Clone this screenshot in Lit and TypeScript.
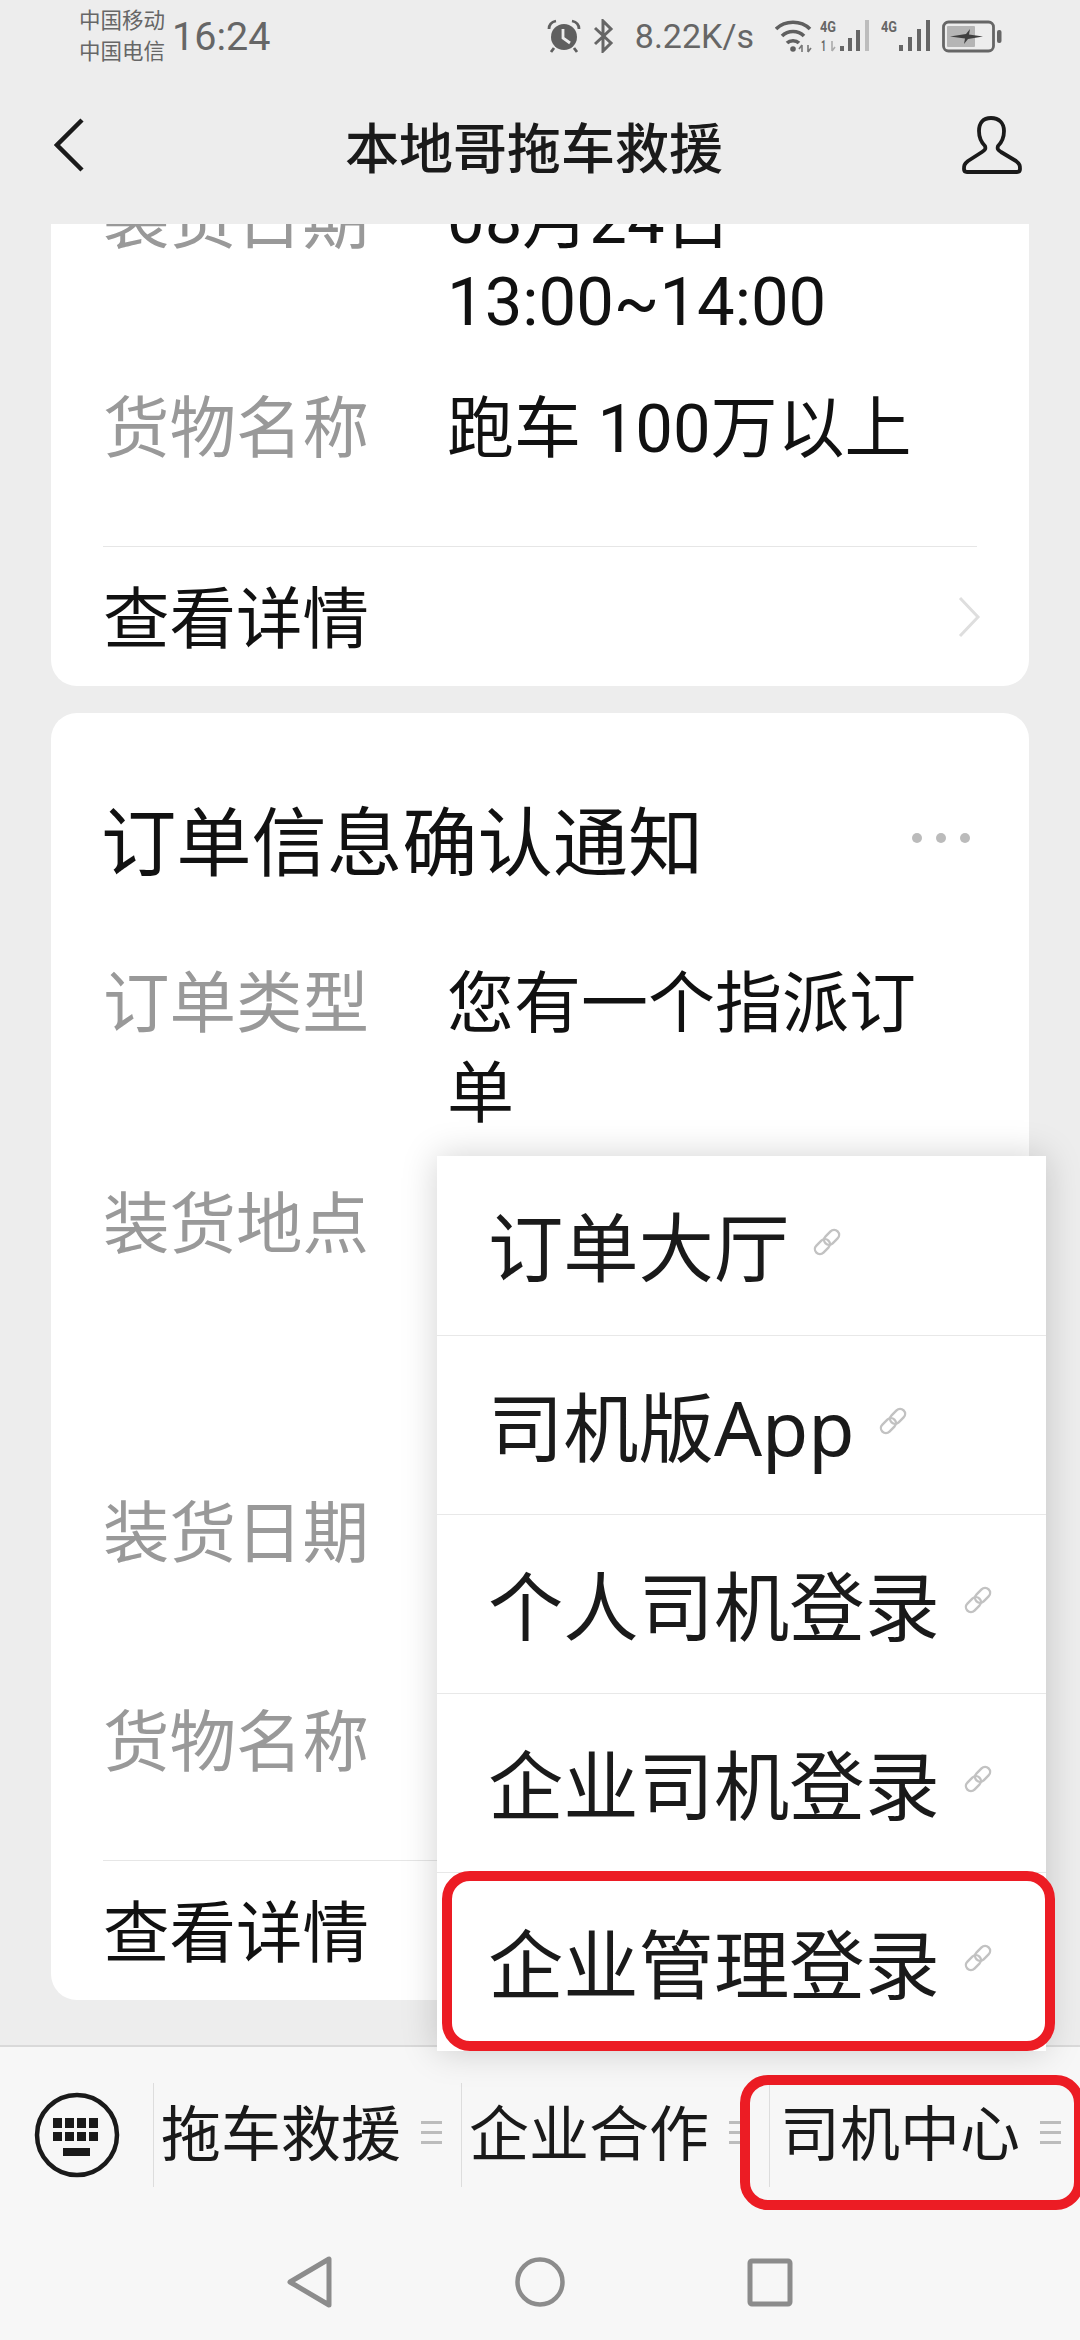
import { LitElement, html, css, svg } from "lit";
import { customElement } from "lit/decorators.js";

const linkIcon = svg`<svg class="link" viewBox="0 0 30 30" fill="none" stroke="#c2c2c2" stroke-width="2.4">
  <g transform="rotate(45 15 15)">
    <rect x="10" y="0" width="10" height="17" rx="5"/>
    <rect x="10" y="13" width="10" height="17" rx="5"/>
  </g>
</svg>`;

const sigText = (x: number, y: number, t: string, w: number) =>
  svg`<text x="${x}" y="${y}" font-size="14" font-family="Roboto, sans-serif" font-weight="700" fill="#666" textLength="${w}" lengthAdjust="spacingAndGlyphs">${t}</text>`;

const signalOne = svg`<svg class="sig" viewBox="0 0 50 34">
  ${sigText(0, 13, "4G", 16)}
  ${sigText(1, 32, "1", 5)}
  <path d="M12 22 V32 M12 32 L15 28" stroke="#aaa" stroke-width="1.6" fill="none"/>
  <g fill="#666">
    <rect x="20" y="27" width="4" height="5"/>
    <rect x="28" y="19" width="4" height="13"/>
    <rect x="36" y="11" width="4" height="21"/>
  </g>
  <rect x="45" y="1" width="4" height="31" fill="#bdbdbd"/>
</svg>`;

const signalTwo = svg`<svg class="sig" viewBox="0 0 50 34">
  ${sigText(0, 13, "4G", 16)}
  <g fill="#666">
    <rect x="18" y="26" width="4" height="6"/>
    <rect x="27" y="18" width="4" height="14"/>
    <rect x="36" y="10" width="4" height="22"/>
    <rect x="45" y="1" width="4" height="31"/>
  </g>
</svg>`;

type Row = { label: string; lines?: string[]; cls?: string };

@customElement("app-root")
export class AppRoot extends LitElement {
  static styles = css`
    :host {
      display: flex;
      flex-direction: column;
      width: 1080px;
      height: 2340px;
      overflow: hidden;
      background: #ededed;
      font-family: Roboto, "Noto Sans CJK SC", sans-serif;
      color: #111;
    }

    /* status bar */
    .status {
      height: 72px;
      flex-shrink: 0;
      display: flex;
      align-items: center;
      padding: 0 78px 0 79px;
      color: #666;
    }
    .carrier {
      font-size: 21.5px;
      line-height: 31px;
      margin-right: 7px;
    }
    .time {
      font-size: 39.5px;
    }
    .sys {
      margin-left: auto;
      display: flex;
      align-items: center;
      gap: 11px;
    }
    .sys svg {
      display: block;
    }
    .alarm { width: 34px; height: 34px; }
    .bt { width: 22px; height: 34px; }
    .speed {
      font-size: 34px;
      margin: 0 10px;
    }
    .wifi { width: 38px; height: 34px; margin-right: -4px; }
    .sig { width: 50px; height: 34px; }
    .batt { width: 60px; height: 34px; }

    /* title bar */
    .nav {
      height: 152px;
      box-sizing: border-box;
      flex-shrink: 0;
      display: flex;
      align-items: center;
      justify-content: space-between;
      padding: 0 58px 6px 54px;
    }
    .nav svg { display: block; }
    .nav-title {
      margin-left: 22px;
      font-size: 54px;
      font-weight: 500;
      color: #1a1a1a;
    }
    .back { width: 30px; height: 54px; }
    .me { width: 60px; height: 58px; }

    /* messages */
    .scroller {
      flex: 1;
      min-height: 0;
      overflow: hidden;
      display: flex;
      flex-direction: column;
      justify-content: flex-end;
      gap: 27px;
      padding: 0 51px 45px;
    }
    .card {
      flex-shrink: 0;
      background: #fff;
      border-radius: 26px;
      padding: 0 52px;
    }
    .card-title {
      display: flex;
      align-items: center;
      justify-content: space-between;
      padding-top: 86px;
      margin-bottom: 70px;
      font-size: 75.3px;
      line-height: 90px;
      color: #111;
    }
    .card-title > span:first-child { margin-left: -2px; }
    .dots {
      display: flex;
      gap: 14px;
      padding: 0 7px 12px 0;
    }
    .dots i {
      width: 10px;
      height: 10px;
      border-radius: 50%;
      background: #bbb;
    }
    .rows {
      display: flex;
      flex-direction: column;
      gap: 45px;
      padding-bottom: 76px;
    }
    .row {
      display: grid;
      grid-template-columns: 344px 1fr;
      line-height: 82px;
    }
    .row.loose { line-height: 90px; }
    .row.h3 { min-height: 264px; }
    .row.h2 { min-height: 164px; }
    .label { color: #999; font-size: 66.5px; }
    .value { color: #111; font-size: 67px; }
    .foot {
      height: 140px;
      box-sizing: border-box;
      border-top: 1px solid #e6e6e6;
      padding-bottom: 6px;
      display: flex;
      align-items: center;
      justify-content: space-between;
      font-size: 66.5px;
    }
    .chev { width: 24px; height: 42px; margin: 6px -4px 0 0; display: block; }

    /* bottom menu + system nav */
    .bottom {
      position: relative;
      height: 295px;
      flex-shrink: 0;
      box-sizing: border-box;
      border-top: 2px solid #d9d9d9;
      background: #f7f7f7;
      padding-top: 36px;
    }
    .tabs {
      display: flex;
      height: 104px;
    }
    .kbd {
      width: 153px;
      flex-shrink: 0;
      display: flex;
      align-items: center;
      justify-content: center;
    }
    .kbd svg { width: 90px; height: 90px; display: block; }
    .tab {
      position: relative;
      flex: 1;
      box-sizing: border-box;
      display: flex;
      align-items: center;
      gap: 20px;
      padding: 0 0 12px 7px;
      border-left: 1px solid #ddd;
      font-size: 60px;
      color: #1a1a1a;
      white-space: nowrap;
    }
    .tab.last { padding-left: 10px; }
    .burger {
      width: 21px;
      flex-shrink: 0;
      display: flex;
      flex-direction: column;
      gap: 7px;
      margin-top: 6px;
    }
    .burger i {
      height: 3px;
      background: #bcbcbc;
    }
    .mark {
      position: absolute;
      box-sizing: border-box;
      border: 10px solid #ec1c24;
      border-radius: 28px;
      pointer-events: none;
    }
    .tab .mark {
      left: -30px;
      right: -4px;
      top: -8px;
      bottom: -23px;
    }
    .sysnav {
      display: flex;
      justify-content: center;
      gap: 180px;
      margin-top: 69px;
    }
    .sysnav svg { width: 50px; height: 52px; display: block; }

    /* popup */
    .menu {
      position: absolute;
      right: 34px;
      bottom: calc(100% - 4px);
      width: 609px;
      background: #fff;
      box-shadow: 0 0 34px rgba(0, 0, 0, 0.18);
    }
    .item {
      position: relative;
      height: 179px;
      box-sizing: border-box;
      display: flex;
      align-items: center;
      gap: 23px;
      padding: 0 0 4px 51px;
      font-family: "Noto Sans", "Noto Sans CJK SC", sans-serif;
      font-size: 75.3px;
      color: #1a1a1a;
    }
    .item + .item { border-top: 1px solid #e8e8e8; }
    .link { width: 30px; height: 30px; margin-bottom: 4px; flex-shrink: 0; }
    .item .mark {
      left: 5px;
      right: -9px;
      top: -2px;
      bottom: 0;
    }
  `;

  private firstCard: Row[] = [
    { label: "装货日期", lines: ["08月24日", "13:00~14:00"] },
    { label: "货物名称", lines: ["跑车 100万以上"] },
  ];

  private secondCard: Row[] = [
    { label: "订单类型", lines: ["您有一个指派订", "单"], cls: "loose" },
    { label: "装货地点", cls: "h3" },
    { label: "装货日期", cls: "h2" },
    { label: "货物名称" },
  ];

  private menuItems = ["订单大厅", "司机版App", "个人司机登录", "企业司机登录", "企业管理登录"];

  private renderRows(rows: Row[]) {
    return html`<div class="rows">
      ${rows.map(
        (r) => html`<div class="row ${r.cls ?? ""}">
          <div class="label">${r.label}</div>
          <div class="value">${(r.lines ?? []).map((l) => html`<div>${l}</div>`)}</div>
        </div>`
      )}
    </div>`;
  }

  private renderFoot() {
    return html`<div class="foot">
      <span>查看详情</span>
      <svg class="chev" viewBox="0 0 24 42" fill="none" stroke="#dedede" stroke-width="3"><path d="M3 2 L21 21 L3 40"/></svg>
    </div>`;
  }

  private renderStatus() {
    return html`<div class="status">
      <div class="carrier"><div>中国移动</div><div>中国电信</div></div>
      <div class="time">16:24</div>
      <div class="sys">
        <svg class="alarm" viewBox="0 0 34 34">
          <circle cx="17" cy="18" r="13" fill="#5f5f5f"/>
          <path d="M16 10 V19 L23 24" fill="none" stroke="#ededed" stroke-width="2.8"/>
          <path d="M2 10 C2 6 4 3 9 2 M32 10 C32 6 30 3 25 2 M7 29 L4 33 M27 29 L30 33" fill="none" stroke="#5f5f5f" stroke-width="2.8"/>
        </svg>
        <svg class="bt" viewBox="0 0 22 34" fill="none" stroke="#666" stroke-width="3">
          <path d="M3 9 L19 24 L11 32 V2 L19 10 L3 25"/>
        </svg>
        <span class="speed">8.22K/s</span>
        <svg class="wifi" viewBox="0 0 38 34" fill="none" stroke="#5f5f5f" stroke-width="3.6">
          <path d="M1 10 C10 1 26 1 35 10"/>
          <path d="M7 17 C13 11 23 11 29 17"/>
          <path d="M12 24 C15 21 21 21 24 24"/>
          <circle cx="18" cy="30" r="2.8" fill="#5f5f5f" stroke="none"/>
          <path d="M27 26 V33 M27 26 L24 30 M33 33 V26 M33 33 L36 29" stroke="#777" stroke-width="1.6"/>
        </svg>
        ${signalOne} ${signalTwo}
        <svg class="batt" viewBox="0 0 60 34">
          <rect x="1.5" y="3" width="50" height="29" rx="5" fill="none" stroke="#666" stroke-width="2.8"/>
          <rect x="5" y="7" width="28" height="21" rx="1" fill="#b5b5b5"/>
          <path d="M8 17.5 L24 15 L28 10 L27 15.5 L41 17.5 L26 20 L22 25 L23 19.5 Z" fill="#3f3f3f"/>
          <rect x="55" y="11" width="4.5" height="13" rx="2" fill="#666"/>
        </svg>
      </div>
    </div>`;
  }

  render() {
    return html`
      ${this.renderStatus()}
      <div class="nav">
        <svg class="back" viewBox="0 0 30 54" fill="none" stroke="#1a1a1a" stroke-width="4.5"><path d="M28 2 L3 27 L28 52"/></svg>
        <div class="nav-title">本地哥拖车救援</div>
        <svg class="me" viewBox="0 0 60 58" fill="none" stroke="#1a1a1a" stroke-width="3.8" stroke-linejoin="round">
          <path d="M29 2 C21 2 17 7 17 15 C17 23 20 27 23 30 C24 33 23 34 20 36 L6 45 C2 48 2 50 2 53 Q2 56 5 56 L55 56 Q58 56 58 53 C58 50 58 48 54 45 L39 36 C36 34 35 33 36 30 C39 27 42 23 42 15 C42 7 37 2 29 2 Z"/>
        </svg>
      </div>

      <div class="scroller">
        <div class="card">
          ${this.renderRows(this.firstCard)}
          ${this.renderFoot()}
        </div>
        <div class="card">
          <div class="card-title">
            <span>订单信息确认通知</span>
            <span class="dots"><i></i><i></i><i></i></span>
          </div>
          ${this.renderRows(this.secondCard)}
          ${this.renderFoot()}
        </div>
      </div>

      <div class="bottom">
        <div class="tabs">
          <div class="kbd">
            <svg viewBox="0 0 90 90">
              <circle cx="45" cy="45" r="40" fill="none" stroke="#1a1a1a" stroke-width="4.5"/>
              <g fill="#1a1a1a">
                <rect x="21" y="28" width="9" height="10"/><rect x="33" y="28" width="9" height="10"/><rect x="45" y="28" width="9" height="10"/><rect x="57" y="28" width="9" height="10"/>
                <rect x="21" y="42" width="9" height="9"/><rect x="33" y="42" width="9" height="9"/><rect x="45" y="42" width="9" height="9"/><rect x="57" y="42" width="9" height="9"/>
                <rect x="31" y="58" width="27" height="8"/>
              </g>
            </svg>
          </div>
          <div class="tab">拖车救援<span class="burger"><i></i><i></i><i></i></span></div>
          <div class="tab">企业合作<span class="burger"><i></i><i></i><i></i></span></div>
          <div class="tab last">司机中心<span class="burger"><i></i><i></i><i></i></span><div class="mark"></div></div>
        </div>
        <div class="sysnav">
          <svg viewBox="0 0 50 52" fill="none" stroke="#8c8c8c" stroke-width="5" stroke-linejoin="round"><path d="M44 3 V49 L5 26 Z"/></svg>
          <svg viewBox="0 0 50 52" fill="none" stroke="#8c8c8c" stroke-width="4.5"><circle cx="25" cy="26" r="22.5"/></svg>
          <svg viewBox="0 0 50 52" fill="none" stroke="#8c8c8c" stroke-width="5"><rect x="5" y="5" width="40" height="43" rx="2"/></svg>
        </div>
        <div class="menu">
          ${this.menuItems.map(
            (m, i) => html`<div class="item">
              <span>${m}</span>${linkIcon}
              ${i === this.menuItems.length - 1 ? html`<div class="mark"></div>` : ""}
            </div>`
          )}
        </div>
      </div>
    `;
  }
}
